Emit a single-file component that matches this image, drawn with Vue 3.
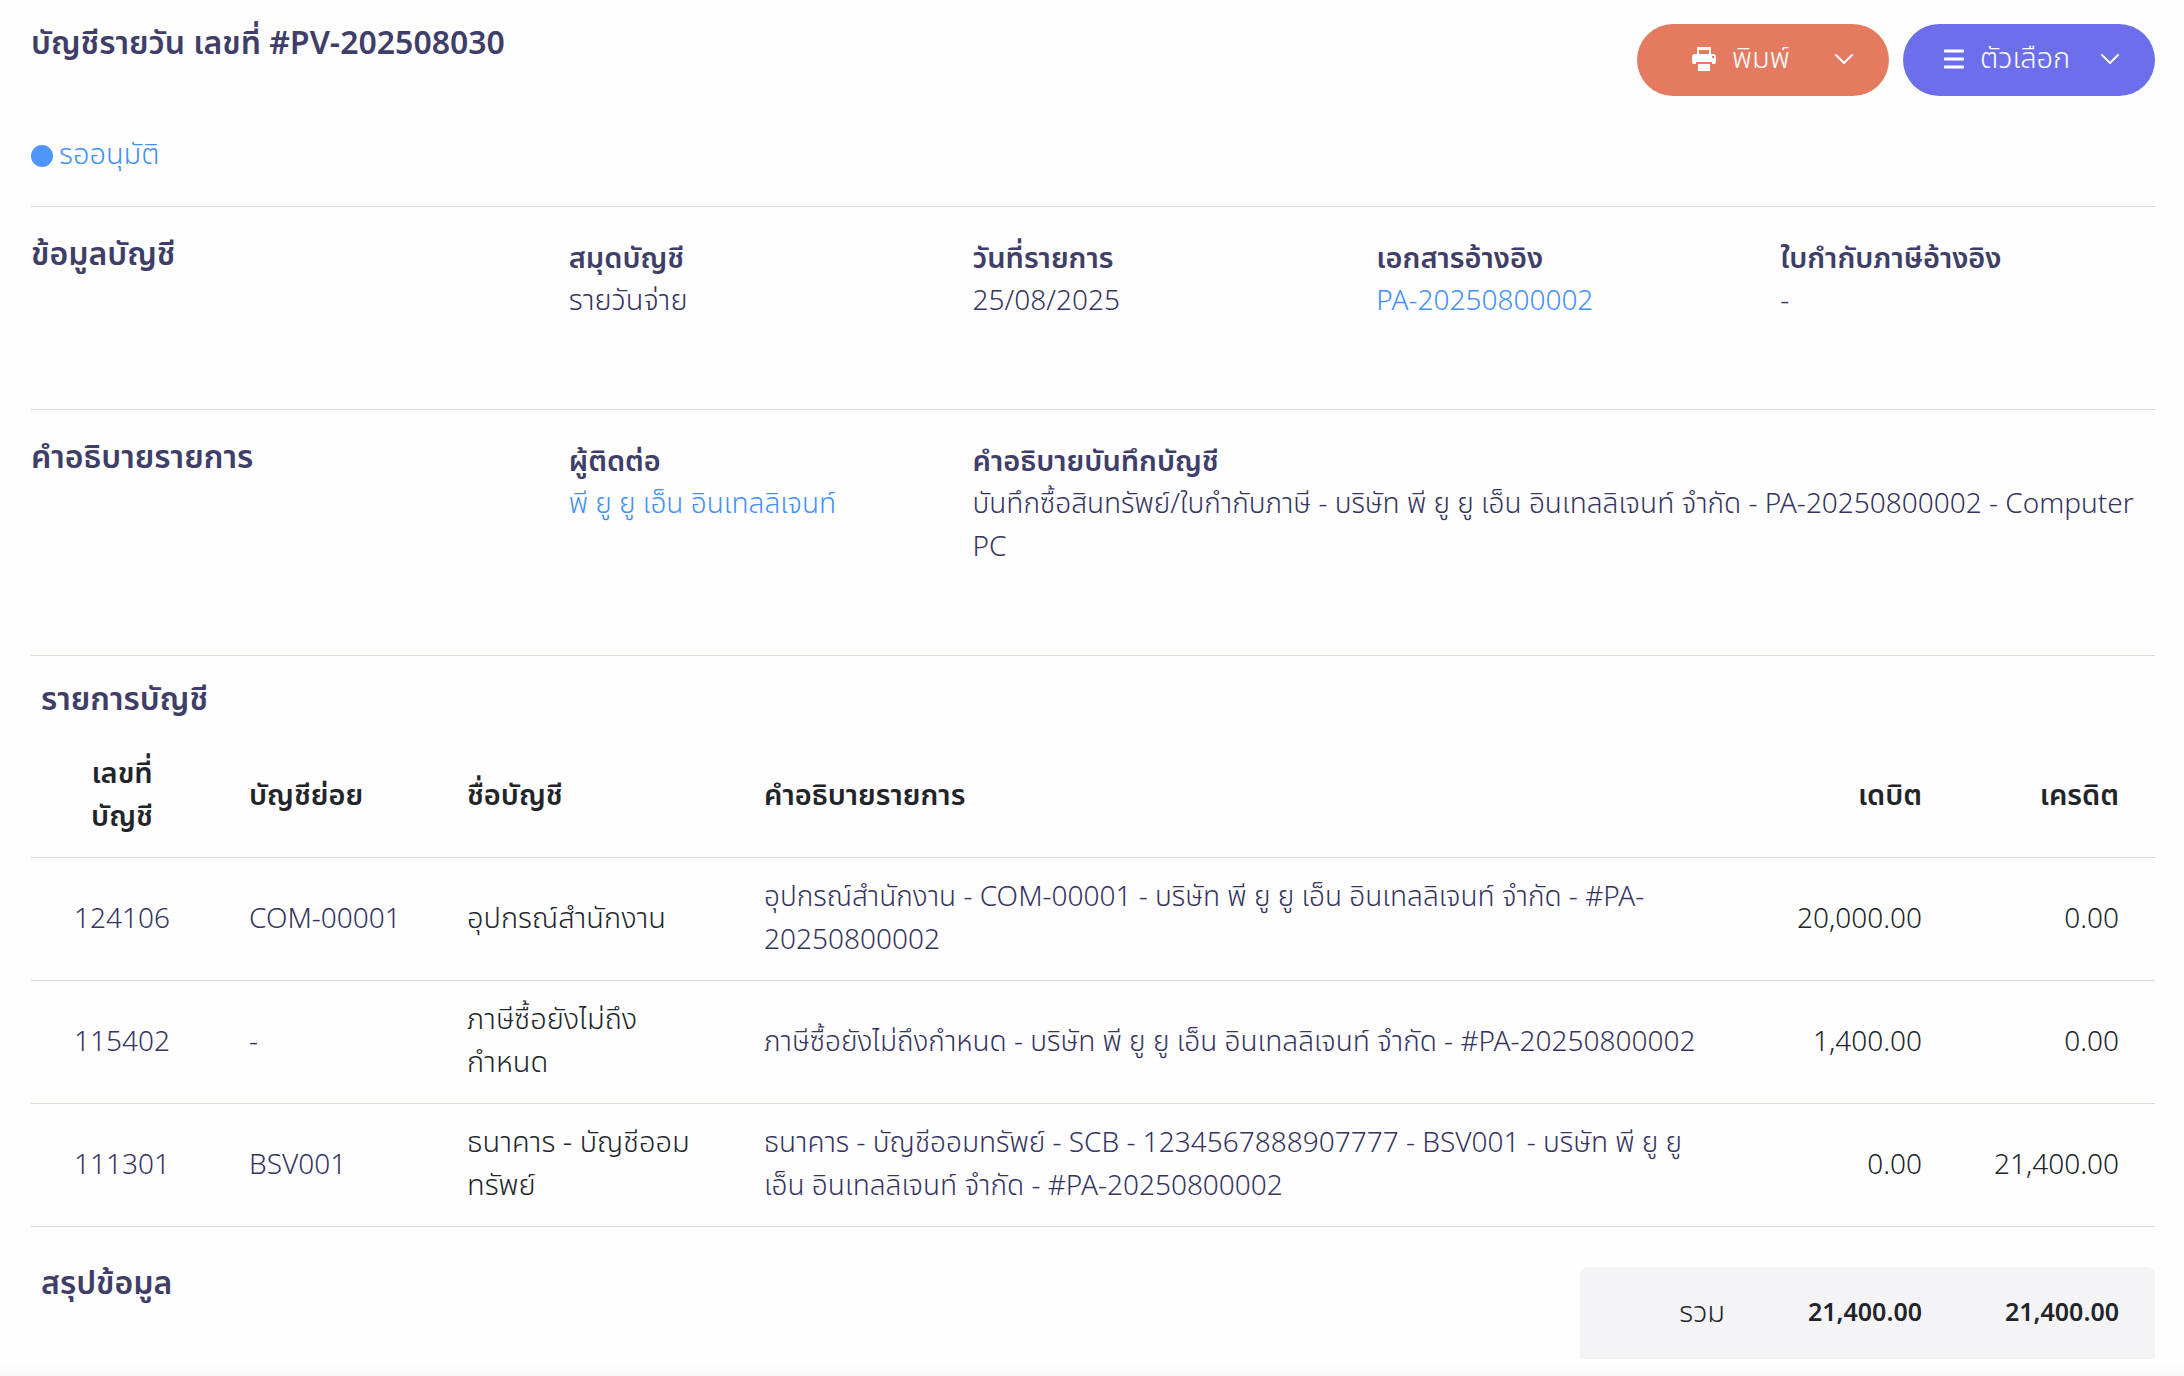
<script setup>
const details = [
  { label: 'สมุดบัญชี', value: 'รายวันจ่าย', thai: true },
  { label: 'วันที่รายการ', value: '25/08/2025' },
  { label: 'เอกสารอ้างอิง', value: 'PA-20250800002', link: true },
  { label: 'ใบกำกับภาษีอ้างอิง', value: '-' },
]

const entries = [
  {
    no: '124106',
    sub: 'COM-00001',
    name: 'อุปกรณ์สำนักงาน',
    memo: 'อุปกรณ์สำนักงาน - COM-00001 - บริษัท พี ยู ยู เอ็น อินเทลลิเจนท์ จำกัด - #PA-20250800002',
    debit: '20,000.00',
    credit: '0.00',
  },
  {
    no: '115402',
    sub: '-',
    name: 'ภาษีซื้อยังไม่ถึงกำหนด',
    memo: 'ภาษีซื้อยังไม่ถึงกำหนด - บริษัท พี ยู ยู เอ็น อินเทลลิเจนท์ จำกัด - #PA-20250800002',
    debit: '1,400.00',
    credit: '0.00',
  },
  {
    no: '111301',
    sub: 'BSV001',
    name: 'ธนาคาร - บัญชีออมทรัพย์',
    memo: 'ธนาคาร - บัญชีออมทรัพย์ - SCB - 1234567888907777 - BSV001 - บริษัท พี ยู ยู เอ็น อินเทลลิเจนท์ จำกัด - #PA-20250800002',
    debit: '0.00',
    credit: '21,400.00',
  },
]
</script>

<template>
  <main class="page">
    <header class="top">
      <h1 class="heading">บัญชีรายวัน เลขที่ #PV-202508030</h1>
      <div class="actions">
        <button type="button" class="btn print">
          <svg class="icon" viewBox="0 0 24 24" aria-hidden="true">
            <path fill="currentColor" fill-rule="evenodd" d="M5 0h14v7h2a3 3 0 0 1 3 3v5a2 2 0 0 1-2 2h-2v-2H4v2H2a2 2 0 0 1-2-2v-5a3 3 0 0 1 3-3h2zM7 3v4h10V3zM20 9v2h2V9zM6 17h12v7H6z" />
          </svg>
          <span>พิมพ์</span>
          <svg class="chevron" viewBox="0 0 18 12" aria-hidden="true">
            <path d="M1 2l8 8 8-8" fill="none" stroke="currentColor" stroke-width="2" stroke-linecap="round" stroke-linejoin="round" />
          </svg>
        </button>
        <button type="button" class="btn options">
          <svg class="icon bars" viewBox="0 0 20 20" aria-hidden="true">
            <path d="M1 2h18M1 10h18M1 18h18" fill="none" stroke="currentColor" stroke-width="3" stroke-linecap="round" />
          </svg>
          <span>ตัวเลือก</span>
          <svg class="chevron" viewBox="0 0 18 12" aria-hidden="true">
            <path d="M1 2l8 8 8-8" fill="none" stroke="currentColor" stroke-width="2" stroke-linecap="round" stroke-linejoin="round" />
          </svg>
        </button>
      </div>
    </header>

    <p class="status thai"><span class="dot"></span>รออนุมัติ</p>

    <section class="block info">
      <h2 class="heading">ข้อมูลบัญชี</h2>
      <div v-for="d in details" :key="d.label" class="field">
        <h3>{{ d.label }}</h3>
        <a v-if="d.link" href="#">{{ d.value }}</a>
        <p v-else :class="{ thai: d.thai }">{{ d.value }}</p>
      </div>
    </section>

    <section class="block info">
      <h2 class="heading">คำอธิบายรายการ</h2>
      <div class="field">
        <h3>ผู้ติดต่อ</h3>
        <a href="#">พี ยู ยู เอ็น อินเทลลิเจนท์</a>
      </div>
      <div class="field wide">
        <h3>คำอธิบายบันทึกบัญชี</h3>
        <p>บันทึกซื้อสินทรัพย์/ใบกำกับภาษี - บริษัท พี ยู ยู เอ็น อินเทลลิเจนท์ จำกัด - PA-20250800002 - Computer PC</p>
      </div>
    </section>

    <section class="block list">
      <h2 class="heading inset">รายการบัญชี</h2>
      <table class="entries">
        <colgroup>
          <col class="c-no" />
          <col class="c-sub" />
          <col class="c-name" />
          <col />
          <col class="c-amount" />
          <col class="c-amount" />
        </colgroup>
        <thead>
          <tr>
            <th scope="col" class="center">เลขที่<br />บัญชี</th>
            <th scope="col">บัญชีย่อย</th>
            <th scope="col">ชื่อบัญชี</th>
            <th scope="col">คำอธิบายรายการ</th>
            <th scope="col" class="num">เดบิต</th>
            <th scope="col" class="num">เครดิต</th>
          </tr>
        </thead>
        <tbody>
          <tr v-for="e in entries" :key="e.no">
            <td class="center soft">{{ e.no }}</td>
            <td class="soft code">{{ e.sub }}</td>
            <td class="thai">{{ e.name }}</td>
            <td class="soft">{{ e.memo }}</td>
            <td class="num">{{ e.debit }}</td>
            <td class="num">{{ e.credit }}</td>
          </tr>
        </tbody>
      </table>
    </section>

    <section class="summary">
      <h2 class="heading inset">สรุปข้อมูล</h2>
      <table class="totals">
        <tbody>
          <tr>
            <th scope="row" class="num thai">รวม</th>
            <td class="num">21,400.00</td>
            <td class="num">21,400.00</td>
          </tr>
        </tbody>
      </table>
    </section>
    <div class="fade"></div>
  </main>
</template>

<style>
body {
  background: #fefefe;
}
</style>

<style scoped>
.page {
  padding: 24px 29px 0 31px;
  color: #35345f;
  font-family: 'Noto Sans Thai', 'Noto Sans', sans-serif;
  font-size: 28px;
  font-weight: 300;
  line-height: 43px;
}
h1, h2, h3, p {
  margin: 0;
}
.heading {
  color: #3f3e68;
  font-size: 32px;
  font-weight: 600;
  line-height: 41px;
}
h3, thead th {
  font-size: 29px;
  font-weight: 600;
}
h3 {
  color: #3f3e68;
  line-height: 42px;
}
.thai {
  font-size: 29px;
}
a {
  color: #4290fa;
  text-decoration: none;
}
.top {
  display: flex;
  justify-content: space-between;
  align-items: flex-start;
}
.actions {
  display: flex;
  gap: 14px;
}
.btn {
  display: flex;
  align-items: center;
  width: 252px;
  height: 72px;
  padding: 0 36px 2px 55px;
  border: 0;
  border-radius: 36px;
  color: #fff;
  font: inherit;
  font-size: 29px;
}
.print {
  background: #e47b61;
}
.options {
  padding-left: 41px;
  background: #6c6eeb;
}
.icon {
  width: 24px;
  height: 24px;
  margin-right: 16px;
}
.bars {
  width: 20px;
  height: 20px;
}
.chevron {
  width: 18px;
  height: 12px;
  margin-left: auto;
}
.status {
  display: flex;
  align-items: center;
  gap: 6px;
  padding: 38px 0 29px;
  color: #4290fa;
}
.dot {
  width: 22px;
  height: 22px;
  border-radius: 50%;
  background: #4f96fa;
}
.block {
  border-top: 1px solid #d8d8e4;
}
.info {
  display: grid;
  grid-template-columns: 509fr repeat(4, 375fr);
  column-gap: 29px;
  padding: 28px 0 86px;
}
.field {
  padding-top: 3px;
}
.wide {
  grid-column: span 3;
}
.inset {
  padding-left: 10px;
}
.list {
  padding-top: 24px;
}
table {
  border-collapse: collapse;
  table-layout: fixed;
  color: #212529;
}
.entries {
  width: 100%;
  margin-top: 14px;
}
.c-no {
  width: 182px;
}
.c-sub {
  width: 218px;
}
.c-name {
  width: 297px;
}
.c-amount {
  width: 197px;
}
th, td {
  padding: 18px 36px;
  text-align: left;
}
.entries tr {
  border-bottom: 1px solid #d8d8e4;
}
.center {
  text-align: center;
}
.num {
  padding-left: 16px;
  text-align: right;
}
.code {
  padding-right: 16px;
}
.soft {
  color: #35345f;
}
.summary {
  display: flex;
  justify-content: space-between;
  align-items: flex-start;
  padding-top: 40px;
}
.summary .heading {
  line-height: 34px;
}
.totals {
  width: 575px;
  overflow: hidden;
  border-radius: 8px 8px 0 0;
  background: #f4f4f7;
}
.totals th, .totals td {
  height: 92px;
  padding-block: 0;
}
.totals th {
  font-weight: 300;
}
.totals td {
  width: 145px;
  font-size: 25px;
  font-weight: 600;
}
.fade {
  height: 17px;
  margin: 0 -29px 0 -31px;
  background: linear-gradient(#fefefe, #f9f9f9);
}
</style>
